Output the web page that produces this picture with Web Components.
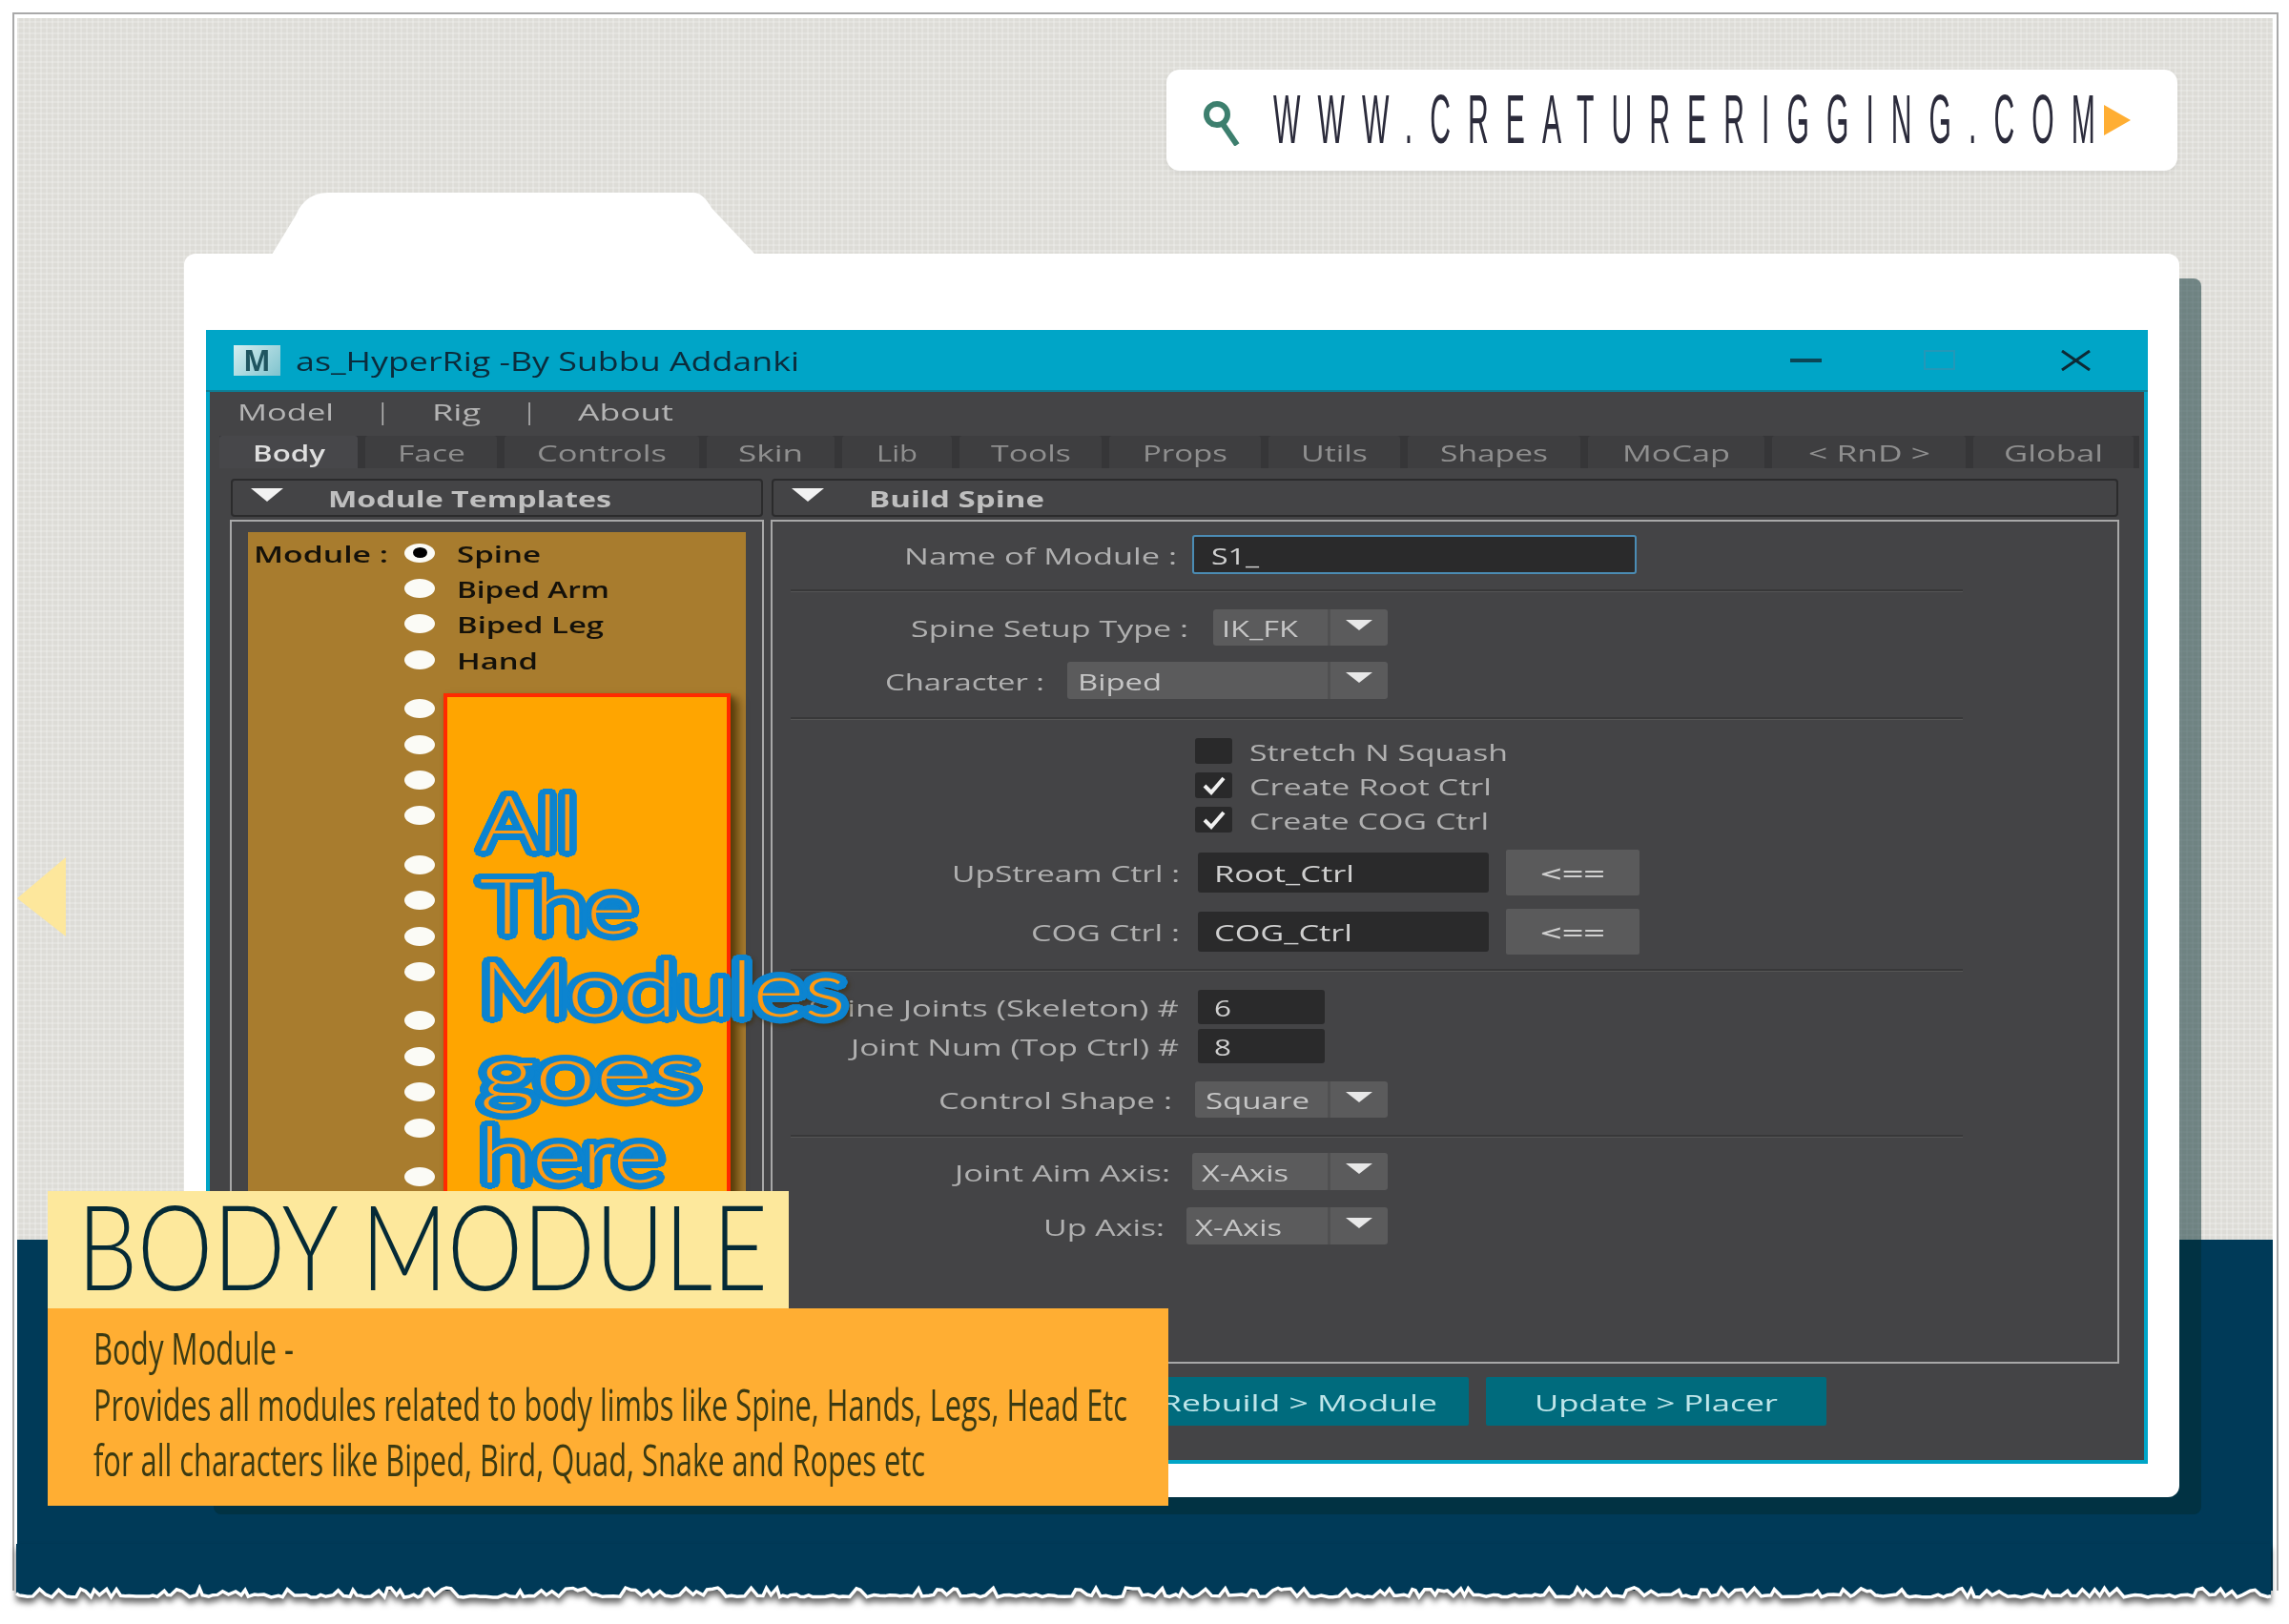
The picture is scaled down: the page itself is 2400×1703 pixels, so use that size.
<!DOCTYPE html>
<html lang="en"><head><meta charset="utf-8"><title>as_HyperRig Body Module</title>
<style>
html,body{margin:0;padding:0;background:#fff;}
body{font-family:"Open Sans","Liberation Sans",sans-serif;width:2400px;height:1703px;overflow:hidden;}
</style></head>
<body>
<paper-frame>
  <url-bar><fit-text w="880" sy="2.4">WWW.CREATURERIGGING.COM</fit-text></url-bar>
  <folder-card>
    <tool-window>
      <title-bar slot="title"><fit-text w="528">as_HyperRig -By Subbu Addanki</fit-text></title-bar>
      <menu-row slot="menu">
        <fit-text w="101">Model</fit-text><span>|</span><fit-text w="51">Rig</fit-text><span>|</span><fit-text w="100">About</fit-text>
      </menu-row>
      <tab-row slot="tabs">
        <tab-item style="--w:145px" active><fit-text w="76">Body</fit-text></tab-item>
        <tab-item style="--w:138px"><fit-text w="71">Face</fit-text></tab-item>
        <tab-item style="--w:204px"><fit-text w="136">Controls</fit-text></tab-item>
        <tab-item style="--w:134px"><fit-text w="68">Skin</fit-text></tab-item>
        <tab-item style="--w:115px"><fit-text w="43">Lib</fit-text></tab-item>
        <tab-item style="--w:149px"><fit-text w="84">Tools</fit-text></tab-item>
        <tab-item style="--w:159px"><fit-text w="89">Props</fit-text></tab-item>
        <tab-item style="--w:138px"><fit-text w="70">Utils</fit-text></tab-item>
        <tab-item style="--w:181px"><fit-text w="113">Shapes</fit-text></tab-item>
        <tab-item style="--w:185px"><fit-text w="113">MoCap</fit-text></tab-item>
        <tab-item style="--w:203px"><fit-text w="128">&lt; RnD &gt;</fit-text></tab-item>
        <tab-item style="--w:168px"><fit-text w="104">Global</fit-text></tab-item>
      </tab-row>
      <panel-col slot="left" style="--w:560px;--z:2">
        <panel-header slot="head" style="--tx:81px"><fit-text w="297">Module Templates</fit-text></panel-header>
        <module-panel>
          <radio-item checked style="--mt:0"><fit-text slot="lead" w="141">Module :</fit-text><fit-text w="88">Spine</fit-text></radio-item>
          <radio-item><fit-text w="160">Biped Arm</fit-text></radio-item>
          <radio-item><fit-text w="154">Biped Leg</fit-text></radio-item>
          <radio-item><fit-text w="85">Hand</fit-text></radio-item>
          <radio-item style="--mt:14px"></radio-item><radio-item></radio-item><radio-item></radio-item><radio-item></radio-item>
          <radio-item style="--mt:14px"></radio-item><radio-item></radio-item><radio-item></radio-item><radio-item></radio-item>
          <radio-item style="--mt:14px"></radio-item><radio-item></radio-item><radio-item></radio-item><radio-item></radio-item>
          <radio-item style="--mt:14px"></radio-item>
          <modules-callout slot="over">
            <fit-text w="102">All</fit-text>
            <fit-text w="164">The</fit-text>
            <fit-text w="384">Modules</fit-text>
            <fit-text w="230">goes</fit-text>
            <fit-text w="192">here</fit-text>
          </modules-callout>
        </module-panel>
      </panel-col>
      <panel-col slot="right" style="--w:1414px;--z:1">
        <panel-header slot="head" style="--tx:81px"><fit-text w="184">Build Spine</fit-text></panel-header>
        <form-frame>
          <form-row style="--mt:14px;--h:41px;--end:424px;--gap:16px"><fit-text slot="label" w="286">Name of Module :</fit-text>
            <text-field focused style="--w:466px"><fit-text w="50">S1_</fit-text></text-field></form-row>
          <sep-line style="--mt:16px"></sep-line>
          <form-row style="--mt:18px;--h:38px;--end:436px;--gap:26px"><fit-text slot="label" w="291">Spine Setup Type :</fit-text>
            <combo-box style="--w:183px;--pl:9px"><fit-text w="80">IK_FK</fit-text></combo-box></form-row>
          <form-row style="--mt:17px;--h:39px;--end:285px;--gap:24px"><fit-text slot="label" w="167">Character :</fit-text>
            <combo-box style="--w:336px;--pl:11px"><fit-text w="88">Biped</fit-text></combo-box></form-row>
          <sep-line style="--mt:19px"></sep-line>
          <check-row style="--mt:19px"><fit-text w="271">Stretch N Squash</fit-text></check-row>
          <check-row checked style="--mt:9px"><fit-text w="254">Create Root Ctrl</fit-text></check-row>
          <check-row checked style="--mt:9px"><fit-text w="251">Create COG Ctrl</fit-text></check-row>
          <form-row style="--mt:18px;--h:48px;--end:427px;--gap:19px"><fit-text slot="label" w="239">UpStream Ctrl :</fit-text>
            <text-field style="--w:305px"><fit-text w="147">Root_Ctrl</fit-text></text-field>
            <arrow-button><fit-text w="68">&lt;==</fit-text></arrow-button></form-row>
          <form-row style="--mt:14px;--h:47px;--end:427px;--gap:19px"><fit-text slot="label" w="156">COG Ctrl :</fit-text>
            <text-field style="--w:305px"><fit-text w="145">COG_Ctrl</fit-text></text-field>
            <arrow-button><fit-text w="68">&lt;==</fit-text></arrow-button></form-row>
          <sep-line style="--mt:16px"></sep-line>
          <form-row style="--mt:19px;--h:36px;--end:426px;--gap:20px"><fit-text slot="label" w="388">Spine Joints (Skeleton) #</fit-text>
            <text-field style="--w:133px;--fh:36px"><fit-text w="18">6</fit-text></text-field></form-row>
          <form-row style="--mt:5px;--h:36px;--end:426px;--gap:20px"><fit-text slot="label" w="344">Joint Num (Top Ctrl) #</fit-text>
            <text-field style="--w:133px;--fh:36px"><fit-text w="18">8</fit-text></text-field></form-row>
          <form-row style="--mt:19px;--h:38px;--end:419px;--gap:24px"><fit-text slot="label" w="245">Control Shape :</fit-text>
            <combo-box style="--w:202px;--pl:11px"><fit-text w="109">Square</fit-text></combo-box></form-row>
          <sep-line style="--mt:18px"></sep-line>
          <form-row style="--mt:16px;--h:39px;--end:417px;--gap:23px"><fit-text slot="label" w="226">Joint Aim Axis:</fit-text>
            <combo-box style="--w:205px;--pl:10px"><fit-text w="91">X-Axis</fit-text></combo-box></form-row>
          <form-row style="--mt:18px;--h:39px;--end:411px;--gap:23px"><fit-text slot="label" w="127">Up Axis:</fit-text>
            <combo-box style="--w:211px;--pl:9px"><fit-text w="91">X-Axis</fit-text></combo-box></form-row>
        </form-frame>
      </panel-col>
      <action-row slot="actions">
        <action-button><fit-text w="290">Rebuild &gt; Module</fit-text></action-button>
        <action-button><fit-text w="255">Update &gt; Placer</fit-text></action-button>
      </action-row>
    </tool-window>
  </folder-card>
  <nav-arrow slot="over"></nav-arrow>
  <lesson-caption slot="over">
    <fit-text slot="title" w="724">BODY MODULE</fit-text>
    <caption-line><fit-text w="210">Body Module -</fit-text></caption-line>
    <caption-line><fit-text w="1084">Provides all modules related to body limbs like Spine, Hands, Legs, Head Etc</fit-text></caption-line>
    <caption-line><fit-text w="872">for all characters like Biped, Bird, Quad, Snake and Ropes etc</fit-text></caption-line>
  </lesson-caption>
  <torn-edge slot="over"></torn-edge>
</paper-frame>

<script>
function def(name, css, html){
  customElements.define(name, class extends HTMLElement{
    constructor(){super();this.attachShadow({mode:'open'}).innerHTML='<style>'+css+'</style>'+html;}
  });
}
customElements.define('fit-text', class extends HTMLElement{
  constructor(){super();this.attachShadow({mode:'open'}).innerHTML='<style>:host{display:inline-block;white-space:nowrap;text-align:left;padding-top:var(--fit-pt,2px);}span{display:inline-block;transform-origin:0 50%;}</style><span><slot></slot></span>';}
  fit(){
    const s=this.shadowRoot.querySelector('span');
    const n=s.getBoundingClientRect().width, w=+this.getAttribute('w'), sy=this.getAttribute('sy')||1;
    this.style.width=w+'px';
    if(n>0) s.style.transform='scale('+(w/n)+','+sy+')';
  }
});
def('paper-frame',`
  :host{display:block;position:relative;margin:13px 0 0 13px;width:2376px;height:1655px;box-sizing:border-box;border:solid #a9a9a9;border-width:2px 2px 0 2px;padding:4px 4px 0 3px;background:#fff;}
  .stage{position:relative;height:1649px;display:flex;flex-direction:column;
    background:linear-gradient(to bottom,transparent 1281px,#003a58 1281px),
      repeating-linear-gradient(90deg,rgba(255,255,255,.2) 0 2px,transparent 2px 6px),
      repeating-linear-gradient(0deg,rgba(255,255,255,.2) 0 2px,transparent 2px 6px),#dddcd7;}
`,`<div class="stage"><slot></slot><slot name="over"></slot></div>`);
def('url-bar',`
  :host{display:flex;align-items:center;box-sizing:border-box;margin:54px 0 0 1205px;width:1060px;height:106px;background:#fff;border-radius:14px;padding-left:38px;
    font:30px "Liberation Sans",sans-serif;letter-spacing:18px;color:#2b2b3b;box-shadow:0 2px 5px rgba(0,0,0,.06);--fit-pt:0px;filter:blur(.5px);}
  svg{flex:none;}
  .s{width:40px;height:47px;margin-right:34px;margin-top:6px;}
  .t{width:28px;height:32px;margin-left:-9px;margin-top:0;}
`,`<svg class="s" viewBox="0 0 40 47"><circle cx="15" cy="14" r="11" fill="none" stroke="#3d7f6e" stroke-width="6"/><path d="M21 24 L36 46" stroke="#3d7f6e" stroke-width="6" fill="none"/></svg><slot></slot><svg class="t" viewBox="0 0 28 32"><path d="M0 0 L28 16 L0 32Z" fill="#ffae33"/></svg>`);
def('folder-card',`
  :host{display:block;position:relative;box-sizing:border-box;margin:87px 0 0 175px;width:2092px;height:1304px;background:#fff;border-radius:12px;padding:80px 0 0 23px;
    box-shadow:27px 22px 0 -4px rgba(2,42,46,.5);}
  svg{position:absolute;left:92px;top:-64px;width:507px;height:65px;}
`,`<svg viewBox="0 0 507 65"><path d="M0 65 L25 24 Q35 0 59 0 L442 0 Q452 0 461 16 L507 65Z" fill="#fff"/></svg><slot></slot>`);
def('tool-window',`
  :host{display:block;width:2036px;height:1189px;background:#00a5c7;box-sizing:border-box;filter:blur(.6px);}
  .body{margin:0 4px;height:1120px;background:#444446;display:flex;flex-direction:column;}
  .panels{display:flex;gap:7px;margin:11px 0 0 21px;}
`,`<slot name="title"></slot><div class="body"><slot name="menu"></slot><slot name="tabs"></slot><div class="panels"><slot name="left"></slot><slot name="right"></slot></div><slot name="actions"></slot></div>`);
def('title-bar',`
  :host{display:flex;align-items:center;height:65px;box-sizing:border-box;padding-left:29px;font-size:27px;color:#0b2c3c;border-bottom:2px solid #0d7f96;}
  .logo{width:49px;height:32px;margin-right:16px;background:linear-gradient(135deg,#d5eef0,#7fc3ce);font:bold 30px/32px "Open Sans",sans-serif;color:#1f5560;text-align:center;}
  .c{display:flex;align-items:center;margin-left:auto;margin-right:59px;}
  .min{width:33px;height:4px;background:#0b4656;}
  .max{width:33px;height:21px;box-sizing:border-box;border:2px solid #2398b8;margin-left:107px;}
  svg{width:33px;height:22px;margin-left:110px;}
`,`<div class="logo">M</div><slot></slot><div class="c"><div class="min"></div><div class="max"></div><svg viewBox="0 0 33 22"><path d="M2 1 L31 21 M31 1 L2 21" stroke="#0d2a35" stroke-width="3" fill="none"/></svg></div>`);
def('menu-row',`
  :host{display:flex;align-items:center;gap:45px;height:40px;padding-left:29px;font-size:23px;color:#b4b4b4;}
`,`<slot></slot>`);
def('tab-row',`
  :host{display:flex;gap:8px;height:34px;margin:6px 5px 0 10px;background:#363638;}
`,`<slot></slot>`);
def('tab-item',`
  :host{display:flex;align-items:center;justify-content:center;width:var(--w);height:34px;background:#3e3e40;border-radius:3px 3px 0 0;font-size:23px;color:#8f8f8f;}
  :host([active]){background:#47474a;color:#dedede;font-weight:600;}
`,`<slot></slot>`);
def('panel-col',`
  :host{display:flex;flex-direction:column;width:var(--w);position:relative;z-index:var(--z);gap:3px;}
`,`<slot name="head"></slot><slot></slot>`);
def('panel-header',`
  :host{display:flex;align-items:center;box-sizing:border-box;height:40px;margin:0 1px;background:#444446;border:2px solid #2b2b2c;border-radius:4px;font-size:23px;font-weight:700;color:#bfbfbf;padding-left:19px;}
  svg{width:34px;height:14px;margin:-6px 0 0 0;flex:none;}
  .sp{width:var(--tx);flex:none;margin-left:-34px;}
`,`<svg viewBox="0 0 34 14"><path d="M0 0H34L17 14Z" fill="#f2f2f2"/></svg><div class="sp"></div><slot></slot>`);
def('module-panel',`
  :host{display:block;position:relative;box-sizing:border-box;height:885px;border:2px solid #a8a8a8;padding:11px 17px 0 17px;}
  .brown{position:relative;height:860px;background:#a87c2e;padding-top:3px;box-sizing:border-box;}
`,`<div class="brown"><slot></slot><slot name="over"></slot></div>`);
def('radio-item',`
  :host{display:grid;grid-template-columns:164px 32px 23px auto;align-items:center;height:37.4px;margin-top:var(--mt,0);font-size:23px;font-weight:600;color:#14110a;}
  .l{padding-left:6px;}
  .r{width:32px;height:20px;border-radius:50%;background:#fbfbf6;display:flex;align-items:center;justify-content:center;}
  :host([checked]) .r::after{content:"";width:15px;height:11px;border-radius:50%;background:#000;}
`,`<div class="l"><slot name="lead"></slot></div><div class="r"></div><div></div><div><slot></slot></div>`);
const ring=[];for(let i=0;i<32;i++){const a=i*Math.PI/16;ring.push((6.5*Math.cos(a)).toFixed(2)+'px '+(6.5*Math.sin(a)).toFixed(2)+'px 0 #0c84d0');}
def('modules-callout',`
  :host{position:absolute;left:205px;top:169px;width:301px;height:540px;box-sizing:border-box;background:#ffa500;border:4px solid #ff2a00;box-shadow:7px 5px 8px rgba(70,45,0,.6);
    padding:87px 0 0 34px;display:flex;flex-direction:column;align-items:flex-start;--fit-pt:0px;
    font:300 80px/87px Lato,"Open Sans",sans-serif;color:#ff9a12;text-shadow:${ring.join(',')};filter:drop-shadow(2px 3px 2px rgba(60,40,0,.5));}
`,`<slot></slot>`);
def('form-frame',`
  :host{display:block;box-sizing:border-box;height:885px;border:2px solid #a8a8a8;font-size:23px;color:#b0b0b0;}
`,`<slot></slot>`);
def('form-row',`
  :host{display:flex;align-items:center;margin-top:var(--mt);height:var(--h);}
  .lab{width:var(--end);flex:none;text-align:right;margin-right:var(--gap);}
  .ctl{display:flex;align-items:center;gap:18px;height:100%;}
`,`<div class="lab"><slot name="label"></slot></div><div class="ctl"><slot></slot></div>`);
def('text-field',`
  :host{display:flex;align-items:center;box-sizing:border-box;width:var(--w);height:var(--fh,42px);padding-left:17px;background:#2a2a2b;border-radius:3px;color:#cfcfcf;}
  :host([focused]){height:41px;border:2px solid #4b8cb4;padding-left:18px;}
`,`<slot></slot>`);
def('combo-box',`
  :host{display:flex;align-items:center;box-sizing:border-box;width:var(--w);height:100%;background:#5b5b5c;border-radius:3px;color:#c6c6c6;padding-left:var(--pl);}
  .a{margin-left:auto;width:60px;height:100%;border-left:3px solid #505051;display:flex;align-items:center;justify-content:center;flex:none;}
  svg{width:28px;height:11px;margin-top:-6px;}
`,`<slot></slot><div class="a"><svg viewBox="0 0 28 11"><path d="M0 0H28L14 11Z" fill="#e8e8e8"/></svg></div>`);
def('sep-line',`
  :host{display:block;box-sizing:border-box;margin:var(--mt) 0 0 19px;width:1229px;height:3px;border-top:2px solid #383839;border-bottom:1px solid #555;}
`,``);
def('check-row',`
  :host{display:flex;align-items:center;gap:18px;margin:var(--mt) 0 0 443px;height:27px;}
  .b{width:39px;height:27px;background:#29292a;border-radius:3px;display:flex;align-items:center;justify-content:center;flex:none;}
  svg{display:none;width:26px;height:21px;}
  :host([checked]) svg{display:block;}
`,`<div class="b"><svg viewBox="0 0 26 21"><path d="M3 11 L10 18 L23 3" stroke="#f0f0f0" stroke-width="4" fill="none"/></svg></div><slot></slot>`);
def('arrow-button',`
  :host{display:flex;align-items:center;justify-content:center;width:140px;height:48px;background:#5a5a5b;color:#d0d0d0;border-radius:2px;font-size:23px;font-weight:600;}
`,`<slot></slot>`);
def('action-row',`
  :host{display:flex;gap:18px;margin:14px 0 0 963px;}
`,`<slot></slot>`);
def('action-button',`
  :host{display:flex;align-items:center;justify-content:center;width:357px;height:51px;background:#006b7d;border-radius:2px;font-size:24px;color:#bfe6ea;}
`,`<slot></slot>`);
def('nav-arrow',`
  :host{position:absolute;left:0;top:880px;width:51px;height:83px;}
  svg{display:block;width:51px;height:83px;}
`,`<svg viewBox="0 0 51 83"><path d="M0 43 L51 0 V83Z" fill="#fde79c"/></svg>`);
def('lesson-caption',`
  :host{position:absolute;left:32px;top:1230px;width:1175px;display:flex;flex-direction:column;align-items:flex-start;z-index:5;--fit-pt:0px;}
  .t{box-sizing:border-box;width:777px;height:123px;background:#fde89c;padding:0 0 12px 31px;display:flex;align-items:center;font:300 124px/1 Lato,"Open Sans",sans-serif;color:#052a36;}
  .b{box-sizing:border-box;width:1175px;height:207px;background:#ffae33;padding:12px 0 0 48px;color:#3b3a12;font-size:46px;display:flex;flex-direction:column;}
`,`<div class="t"><slot name="title"></slot></div><div class="b"><slot></slot></div>`);
def('caption-line',`
  :host{display:block;height:58.5px;line-height:58px;}
`,`<slot></slot>`);
customElements.define('torn-edge', class extends HTMLElement{
  constructor(){
    super();
    let seed=7; const r=()=>{seed=(seed*16807)%2147483647;return seed/2147483647;};
    let line='M0 22', x=0;
    while(x<2364){ x+=3+r()*5; line+=' L'+Math.min(x,2364).toFixed(1)+' '+(r()<.3?16+r()*4:23+r()*3).toFixed(1); }
    const fill=line+' L2364 -30 L0 -30Z';
    this.attachShadow({mode:'open'}).innerHTML='<style>:host{position:absolute;left:-1px;top:1630px;width:2366px;height:40px;display:block;z-index:1;}svg{display:block;overflow:visible;filter:drop-shadow(0 5px 3px rgba(0,0,0,.6));}</style><svg width="2366" height="40" viewBox="0 0 2366 40"><path d="'+fill+'" fill="#003a58"/><path d="'+line+'" fill="none" stroke="#fff" stroke-width="3.5"/></svg>';
  }
});
document.querySelectorAll('fit-text').forEach(f=>f.fit());
</script>
</body></html>
